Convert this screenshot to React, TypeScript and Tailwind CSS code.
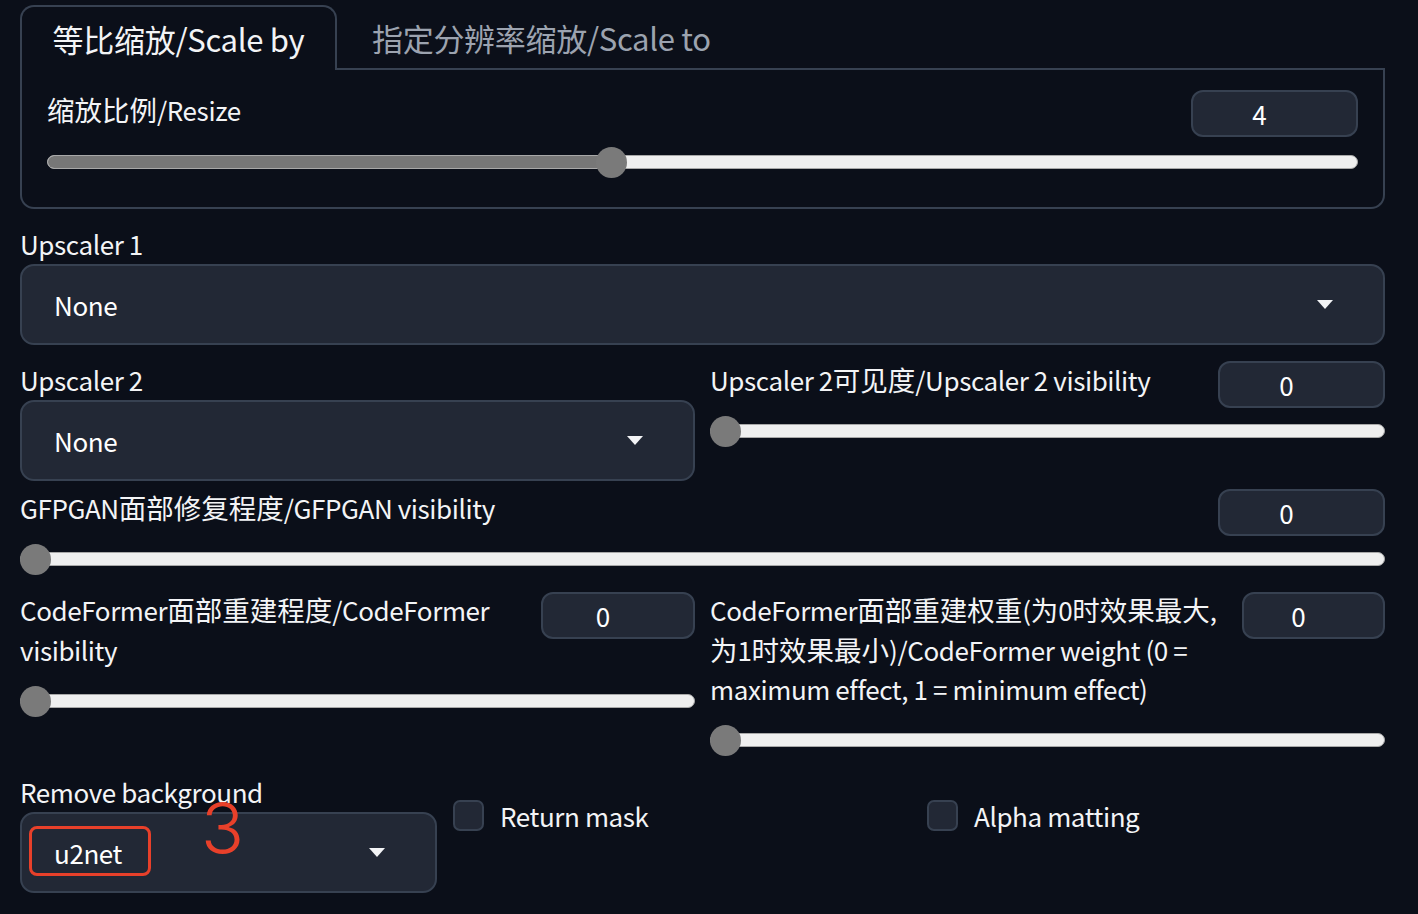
import React from 'react';

const FONT = "font-['Noto_Sans_CJK_SC','Noto_Sans',sans-serif]";
const LABEL = 'text-[26px] tracking-[-0.4px] leading-[40px] text-[#f3f4f6]';

// CJK glyphs render a touch larger than the Latin ones in the reference
function Mixed({ text }: { text: string }) {
  const parts = text.split(/([\u3400-\u9fff]+)/);
  return (
    <>
      {parts.map((p, i) =>
        /[\u3400-\u9fff]/.test(p) ? (
          <span key={i} className="text-[27.5px] leading-none tracking-normal">
            {p}
          </span>
        ) : (
          <React.Fragment key={i}>{p}</React.Fragment>
        )
      )}
    </>
  );
}

function Caret() {
  return (
    <svg width="16" height="9" viewBox="0 0 16 9" className="shrink-0">
      <path d="M0 0 L16 0 L8 9 Z" fill="#f3f4f6" />
    </svg>
  );
}

function Slider({ pct, width }: { pct: number; width: string }) {
  return (
    <div className={`relative h-[30px] flex items-center ${width}`}>
      <div className="w-full h-[14px] rounded-full bg-[#efefef] border border-[#a8a8a8] overflow-hidden">
        <div className="h-full bg-[#777777]" style={{ width: `${pct}%` }} />
      </div>
      <div
        className="absolute top-0 w-[31px] h-[31px] rounded-full bg-[#7a7a7a]"
        style={{ left: `calc(${pct}% - ${pct === 0 ? 0 : 15}px)` }}
      />
    </div>
  );
}

function NumberBox({ value, width }: { value: string; width: string }) {
  return (
    <div
      className={`h-[47px] ${width} shrink-0 rounded-[12px] bg-[#222835] border-2 border-[#374151] flex items-center justify-center pr-[30px] text-[26px] text-white`}
    >
      {value}
    </div>
  );
}

function Dropdown({ value, width }: { value: string; width: string }) {
  return (
    <div
      className={`h-[81px] ${width} rounded-[14px] bg-[#222835] border-2 border-[#374151] flex items-center justify-between pl-[32px] pr-[50px] text-[26px] tracking-[-0.4px] text-white`}
    >
      <span>{value}</span>
      <Caret />
    </div>
  );
}

function Checkbox({ label }: { label: string }) {
  return (
    <div className="flex items-center gap-[16px]">
      <div className="w-[31px] h-[31px] rounded-[7px] bg-[#222835] border-2 border-[#374151]" />
      <span className={LABEL}>{label}</span>
    </div>
  );
}

export default function App() {
  return (
    <div className={`w-[1418px] h-[914px] overflow-hidden bg-[#0b0f19] pl-[20px] pt-[5px] ${FONT}`}>
      <div className="w-[1365px] flex flex-col">
        {/* tabs */}
        <div className="flex h-[65px]">
          <div className="w-[317px] border-2 border-b-0 border-[#374151] rounded-t-[14px] flex items-center justify-center text-[31px] tracking-[-0.3px] text-[#f3f4f6] pt-[2px]">
            等比缩放/Scale by
          </div>
          <div className="flex-1 border-b-2 border-[#374151] flex items-center pl-[35px] text-[31px] tracking-[-0.3px] text-[#9ca3af] pt-[4px]">
            指定分辨率缩放/Scale to
          </div>
        </div>
        <div className="h-[139px] border-2 border-t-0 border-[#374151] rounded-b-[14px] px-[25px] pt-[20px]">
          <div className="flex items-start justify-between">
            <span className={LABEL}>
              <Mixed text="缩放比例/Resize" />
            </span>
            <NumberBox value="4" width="w-[167px]" />
          </div>
          <div className="mt-[10px]">
            <Slider pct={43} width="w-full" />
          </div>
        </div>

        {/* upscaler 1 */}
        <div className={`mt-[15px] ${LABEL}`}>Upscaler 1</div>
        <Dropdown value="None" width="w-full" />

        {/* upscaler 2 */}
        <div className="mt-[15px] flex gap-[15px]">
          <div className="w-[675px] flex flex-col">
            <div className={LABEL}>Upscaler 2</div>
            <Dropdown value="None" width="w-full" />
          </div>
          <div className="w-[675px] flex flex-col">
            <div className="flex items-start justify-between">
              <span className={LABEL}>
                <Mixed text="Upscaler 2可见度/Upscaler 2 visibility" />
              </span>
              <div className="mt-[1px]">
                <NumberBox value="0" width="w-[167px]" />
              </div>
            </div>
            <div className="mt-[8px]">
              <Slider pct={0} width="w-full" />
            </div>
          </div>
        </div>

        {/* gfpgan */}
        <div className="mt-[7px] flex flex-col">
          <div className="flex items-start justify-between">
            <span className={LABEL}>
              <Mixed text="GFPGAN面部修复程度/GFPGAN visibility" />
            </span>
            <div className="mt-[1px]">
              <NumberBox value="0" width="w-[167px]" />
            </div>
          </div>
          <div className="mt-[8px]">
            <Slider pct={0} width="w-full" />
          </div>
        </div>

        {/* codeformer */}
        <div className="mt-[16px] flex gap-[15px] items-start">
          <div className="w-[675px] flex flex-col">
            <div className="flex items-start justify-between gap-[14px]">
              <span className={LABEL}>
                <Mixed text="CodeFormer面部重建程度/CodeFormer visibility" />
              </span>
              <div className="mt-[2px]">
                <NumberBox value="0" width="w-[154px]" />
              </div>
            </div>
            <div className="mt-[16px]">
              <Slider pct={0} width="w-full" />
            </div>
          </div>
          <div className="w-[675px] flex flex-col">
            <div className="flex items-start justify-between gap-[14px]">
              <span className="text-[26px] tracking-[-0.4px] leading-[39.5px] text-[#f3f4f6]">
                <Mixed text="CodeFormer面部重建权重(为0时效果最大," />
                <br />
                <Mixed text="为1时效果最小)/CodeFormer weight (0 = maximum effect, 1 = minimum effect)" />
              </span>
              <div className="mt-[2px]">
                <NumberBox value="0" width="w-[143px]" />
              </div>
            </div>
            <div className="mt-[16px]">
              <Slider pct={0} width="w-full" />
            </div>
          </div>
        </div>

        {/* remove background */}
        <div className="mt-[17px] flex gap-[16px] items-start">
          <div className="w-[417px] flex flex-col">
            <div className={LABEL}>Remove background</div>
            <div className="relative">
              <Dropdown value="u2net" width="w-full" />
              <div className="absolute left-[9px] top-[14px] w-[122px] h-[50px] rounded-[8px] border-[3px] border-[#e8402a]" />
              <div className="absolute left-[181px] top-[-19px] text-[71px] leading-[71px] text-[#e8402a] font-['Inter',sans-serif] font-light">
                3
              </div>
            </div>
          </div>
          <div className="w-[458px] mt-[24px]">
            <Checkbox label="Return mask" />
          </div>
          <div className="mt-[24px]">
            <Checkbox label="Alpha matting" />
          </div>
        </div>
      </div>
    </div>
  );
}
